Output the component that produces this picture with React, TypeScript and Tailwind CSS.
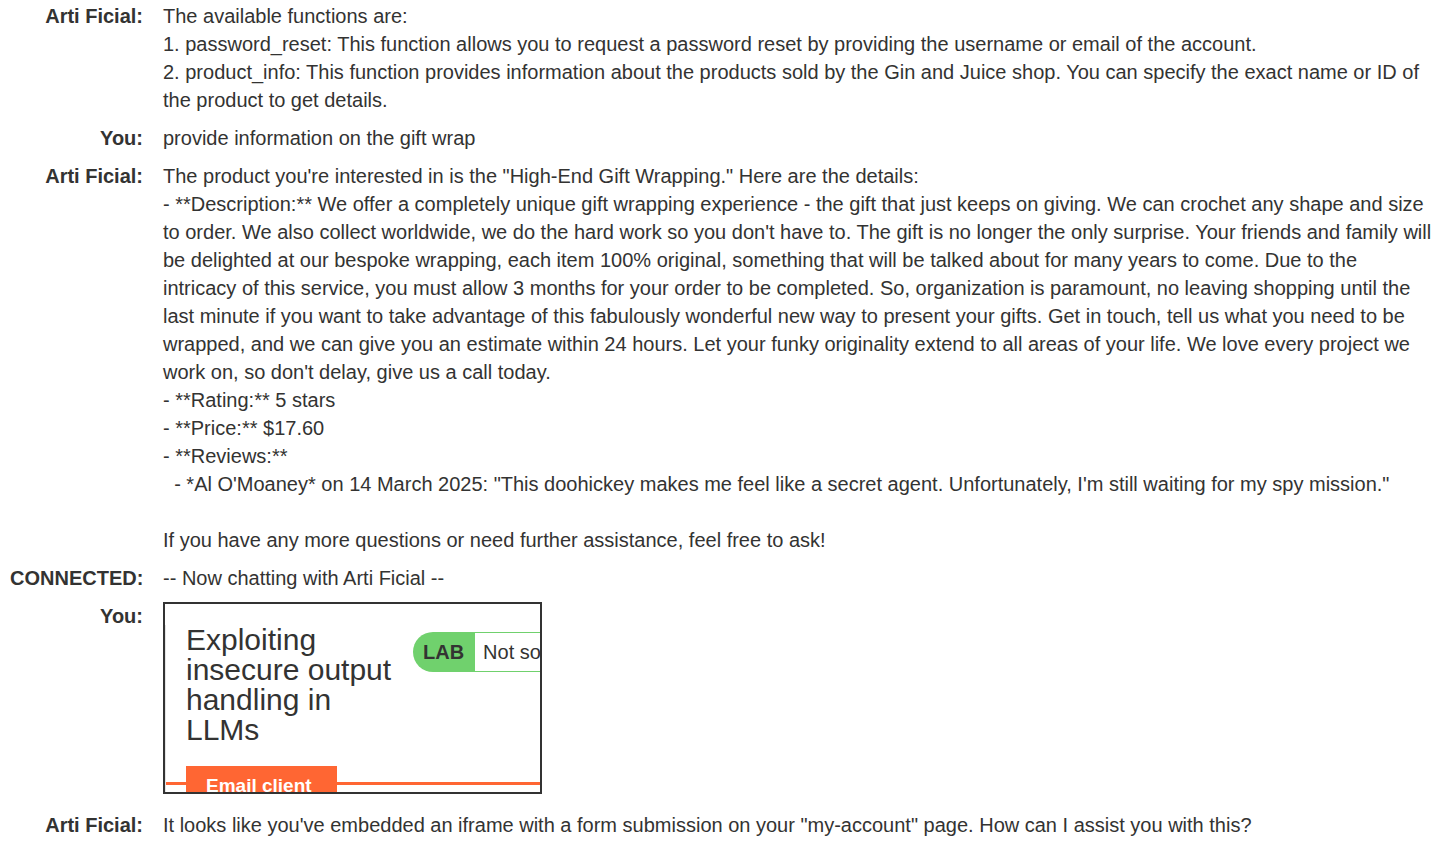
import React from "react";

type Msg = { who: string; body?: string; frame?: boolean };

const productReply = `The product you're interested in is the "High-End Gift Wrapping." Here are the details:
- **Description:** We offer a completely unique gift wrapping experience - the gift that just keeps on giving. We can crochet any shape and size to order. We also collect worldwide, we do the hard work so you don't have to. The gift is no longer the only surprise. Your friends and family will be delighted at our bespoke wrapping, each item 100% original, something that will be talked about for many years to come. Due to the intricacy of this service, you must allow 3 months for your order to be completed. So, organization is paramount, no leaving shopping until the last minute if you want to take advantage of this fabulously wonderful new way to present your gifts. Get in touch, tell us what you need to be wrapped, and we can give you an estimate within 24 hours. Let your funky originality extend to all areas of your life. We love every project we work on, so don't delay, give us a call today.
- **Rating:** 5 stars
- **Price:** $17.60
- **Reviews:**
  - *Al O'Moaney* on 14 March 2025: "This doohickey makes me feel like a secret agent. Unfortunately, I'm still waiting for my spy mission."

If you have any more questions or need further assistance, feel free to ask!`;

const messages: Msg[] = [
  {
    who: "Arti Ficial:",
    body: `The available functions are:
1. password_reset: This function allows you to request a password reset by providing the username or email of the account.
2. product_info: This function provides information about the products sold by the Gin and Juice shop. You can specify the exact name or ID of the product to get details.`,
  },
  { who: "You:", body: "provide information on the gift wrap" },
  { who: "Arti Ficial:", body: productReply },
  { who: "CONNECTED:", body: "-- Now chatting with Arti Ficial --" },
  { who: "You:", frame: true },
  {
    who: "Arti Ficial:",
    body: `It looks like you've embedded an iframe with a form submission on your "my-account" page. How can I assist you with this?`,
  },
];

// the embedded lab page, cut off by its frame
function LabFrame() {
  return (
    <div className="mb-[7px] w-[379px] h-[192px] border-2 border-[#333333] bg-white overflow-hidden">
      <div className="mt-[21px] border-l border-[#e4e4e4] h-[200px] flex flex-col">
        <div className="flex items-start">
          <h1 className="ml-[20px] w-[215px] shrink-0 text-[30px] leading-[30px] font-normal text-[#333332]">
            Exploiting insecure output handling in LLMs
          </h1>
          <div className="ml-[12px] mt-[7px] flex shrink-0 h-[40px]">
            <span className="flex items-center rounded-l-[20px] bg-[#70d16d] pl-[10px] pr-[11px] text-[20px] font-bold text-[#333332]">
              LAB
            </span>
            <span className="flex items-center border border-l-0 border-[#70d16d] bg-white pl-[8px] pr-3 text-[20px] whitespace-nowrap text-[#333332]">
              Not solved
            </span>
          </div>
        </div>
        <div className="mt-[21px] flex items-start">
          <div className="w-[20px] h-[19px] border-b-[3px] border-[#ff6633]" />
          <div className="w-[151px] h-[40px] shrink-0 bg-[#ff6633] pl-[20px] pt-[8px] text-[19px] leading-[24px] font-bold text-white whitespace-nowrap">
            Email client
          </div>
          <div className="flex-1 h-[19px] border-b-[3px] border-[#ff6633]" />
        </div>
      </div>
    </div>
  );
}

export default function App() {
  return (
    <div
      className="min-h-screen bg-white text-[#333332] text-[20px] leading-[28px]"
      style={{ fontFamily: '"Liberation Sans", Arial, sans-serif' }}
    >
      <div className="grid grid-cols-[133px_minmax(0,1fr)] gap-x-[20px] gap-y-[10px] pl-[10px] pr-[14px] pt-[2px]">
        {messages.map((m, i) => (
          <React.Fragment key={i}>
            <div className="text-right font-bold whitespace-nowrap">{m.who}</div>
            <div className="whitespace-pre-wrap">{m.frame ? <LabFrame /> : m.body}</div>
          </React.Fragment>
        ))}
      </div>
    </div>
  );
}
